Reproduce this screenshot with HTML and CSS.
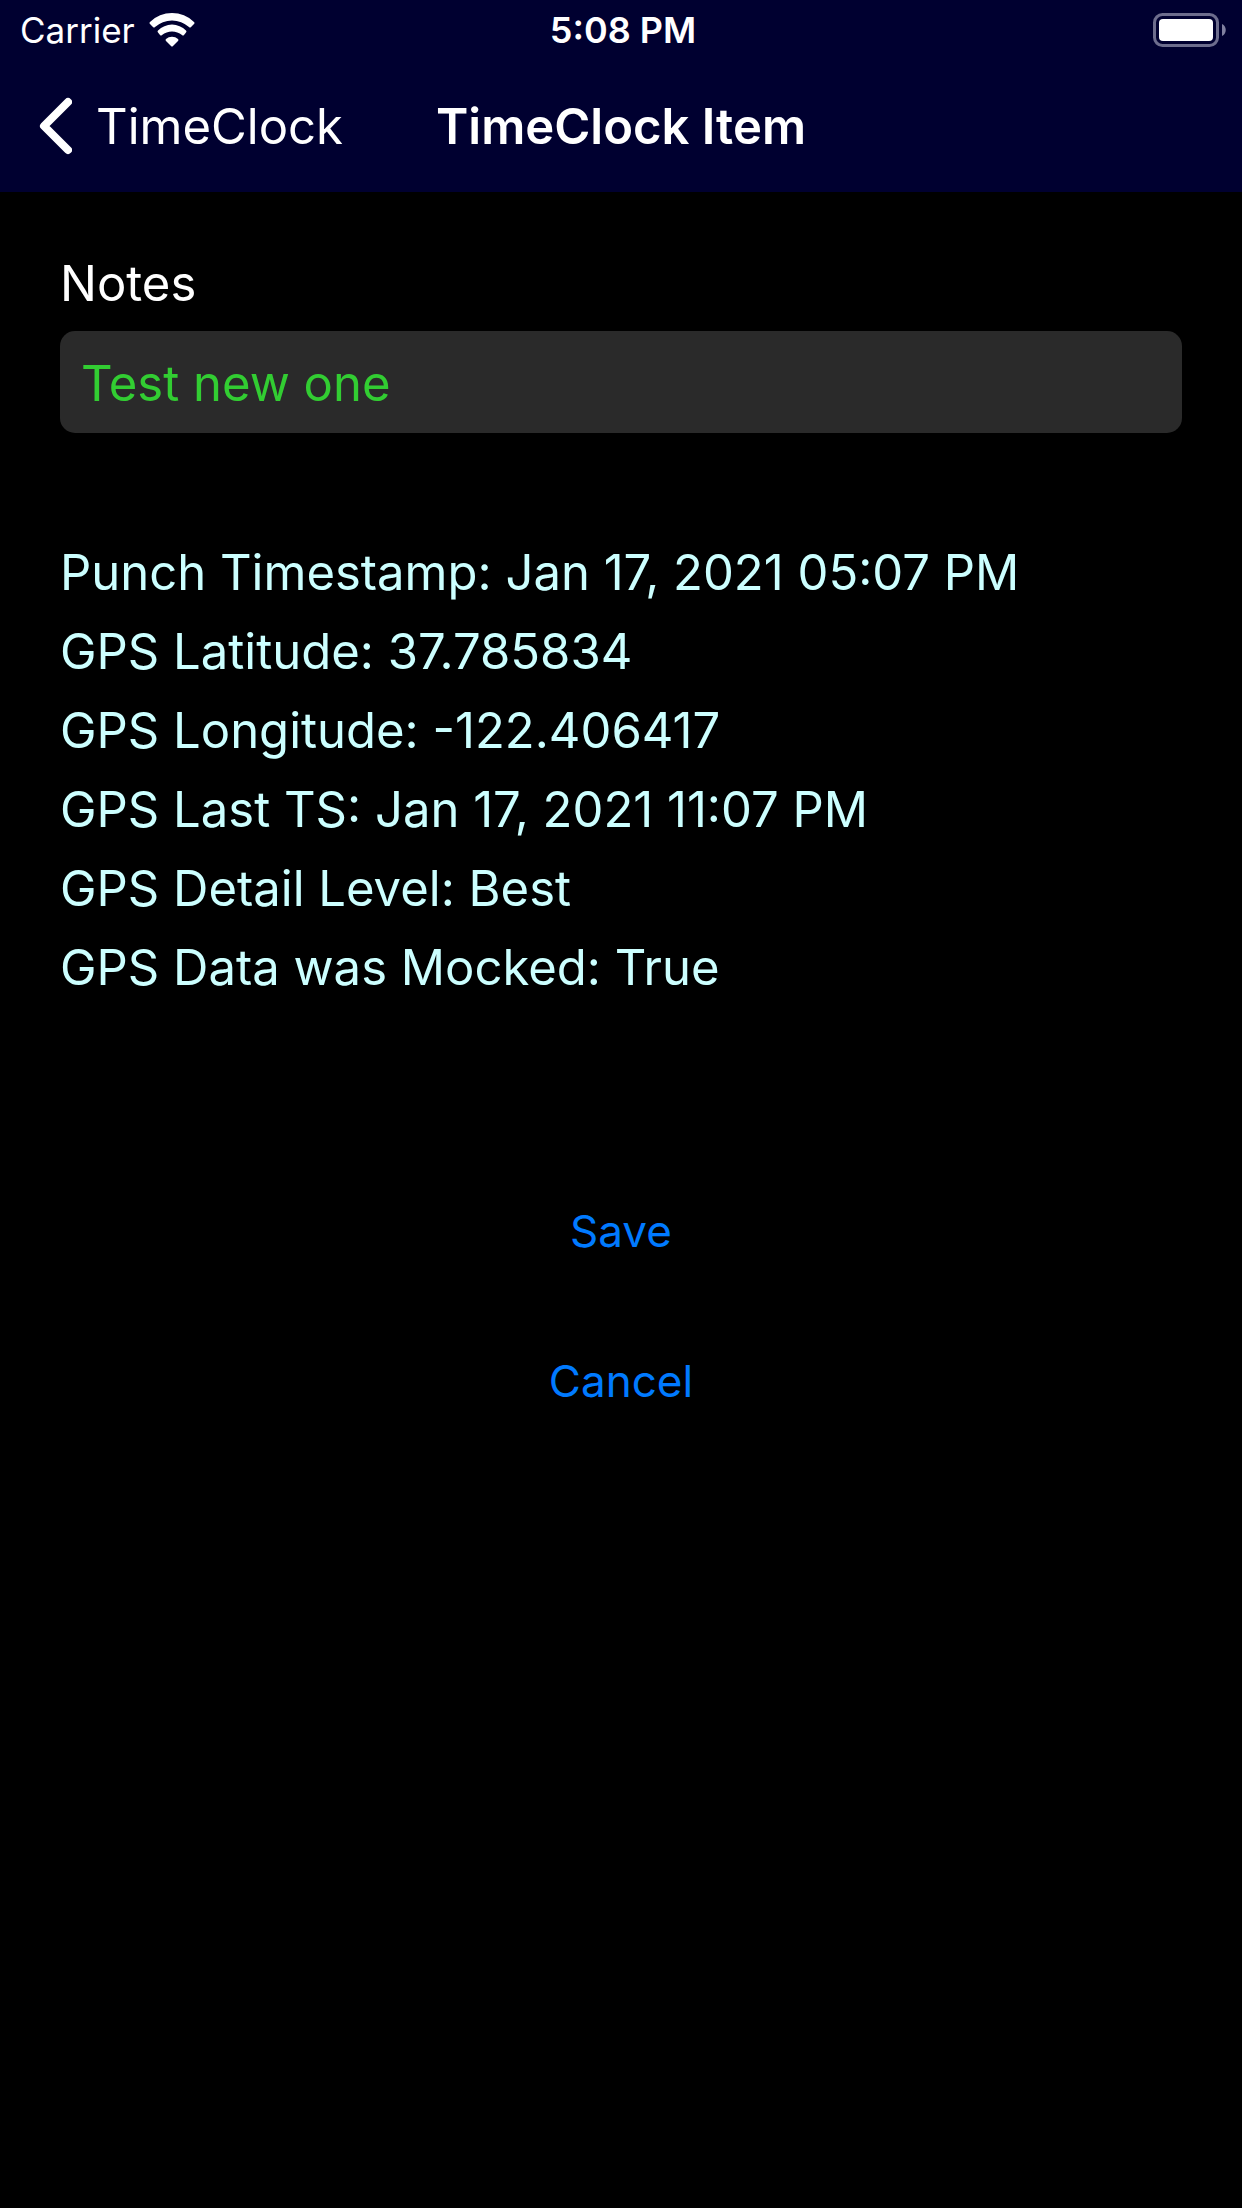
FILE: index.html
```html
<!DOCTYPE html>
<html lang="en">
<head>
<meta charset="utf-8">
<title>TimeClock Item</title>
<meta name="viewport" content="width=device-width, initial-scale=1">
<link rel="stylesheet" href="styles.css">
</head>
<body>
<header class="top">
  <div class="status">
    <div class="status-left">
      <span>Carrier</span>
      <svg class="wifi" viewBox="0 0 46 34" aria-hidden="true">
        <path d="M1 9A31.500 31.500 0 0 1 45 9Q46 10 45 11L42 14Q41 15 40 14A25.300 25.300 0 0 0 6 14Q5 15 4 14L1 11Q0 10 1 9Z"/>
        <path d="M9 17.500A19.600 19.600 0 0 1 37 17.500Q38 18.500 37 19.500L35 22Q34 23 33 22A15.700 15.700 0 0 0 13 22Q12 23 11 22L9 19.500Q8 18.500 9 17.500Z"/>
        <path d="M17 26A9 9 0 0 1 29 26Q30 27 29 28L24 33Q23 34 22 33L17 28Q16 27 17 26Z"/>
      </svg>
    </div>
    <time class="clock">5:08 PM</time>
    <svg class="battery" viewBox="0 0 73 34" aria-hidden="true">
      <rect class="battery-shell" x="1.500" y="1.500" width="63" height="31" rx="8"/>
      <rect x="6" y="6" width="54" height="22" rx="4"/>
      <path class="battery-cap" d="M69 11C74 13 74 21 69 23Z"/>
    </svg>
  </div>
  <nav class="nav">
    <a class="back" href="#">
      <svg class="chevron" viewBox="0 0 36 60" aria-hidden="true"><path d="M32 6L8 30L32 54"/></svg>
      <span>TimeClock</span>
    </a>
    <h1 class="title">TimeClock Item</h1>
    <span></span>
  </nav>
</header>
<main class="content">
  <label class="label" for="notes">Notes</label>
  <input class="field" id="notes" type="text" value="Test new one">
  <div class="details">
    <p>Punch Timestamp: Jan 17, 2021 05:07 PM</p>
    <p>GPS Latitude: 37.785834</p>
    <p>GPS Longitude: -122.406417</p>
    <p>GPS Last TS: Jan 17, 2021 11:07 PM</p>
    <p>GPS Detail Level: Best</p>
    <p>GPS Data was Mocked: True</p>
  </div>
  <div class="actions">
    <button class="action" type="button">Save</button>
    <button class="action" type="button">Cancel</button>
  </div>
</main>
</body>
</html>
```

FILE: styles.css
```css
* { box-sizing: border-box; }
body {
  margin: 0;
  background: #000;
  color: #fff;
  font-family: Inter, "Liberation Sans", sans-serif;
  font-size: 49px;
}
.top { background: #000030; }
.status {
  display: grid;
  grid-template-columns: 1fr auto 1fr;
  align-items: center;
  height: 60px;
  padding: 0 16px 0 20px;
  font-size: 35px;
}
.status-left { display: flex; align-items: center; gap: 14px; }
.wifi { width: 46px; height: 34px; fill: #fff; }
.clock { font-size: 36px; font-weight: 600; }
.battery { width: 73px; height: 34px; fill: #fff; justify-self: end; }
.battery-shell { fill: none; stroke: #6d6d8d; stroke-width: 3; }
.battery-cap { fill: #8080a0; }
.nav {
  display: grid;
  grid-template-columns: 1fr auto 1fr;
  align-items: center;
  height: 132px;
  padding: 0 36px;
}
.back { display: flex; align-items: center; gap: 24px; color: inherit; text-decoration: none; }
.chevron { width: 36px; height: 60px; fill: none; stroke: #fff; stroke-width: 8; stroke-linecap: round; stroke-linejoin: round; }
.title { margin: 0; font-size: 49px; font-weight: 600; }
.content { padding: 60px; }
.label { display: block; line-height: 63px; margin-bottom: 16px; }
.field {
  display: block;
  width: 100%;
  height: 102px;
  padding: 2px 21px 0;
  border: 0;
  border-radius: 15px;
  background: #2a2a2a;
  color: #32cd32;
  font: inherit;
}
.details { margin-top: 100px; color: #ccffff; line-height: 79px; }
.details p { margin: 0; }
.actions { display: flex; flex-direction: column; align-items: center; gap: 18px; margin-top: 158px; }
.action { height: 132px; padding: 0 24px; border: 0; background: none; color: #007aff; font: inherit; font-size: 44px; }
```
